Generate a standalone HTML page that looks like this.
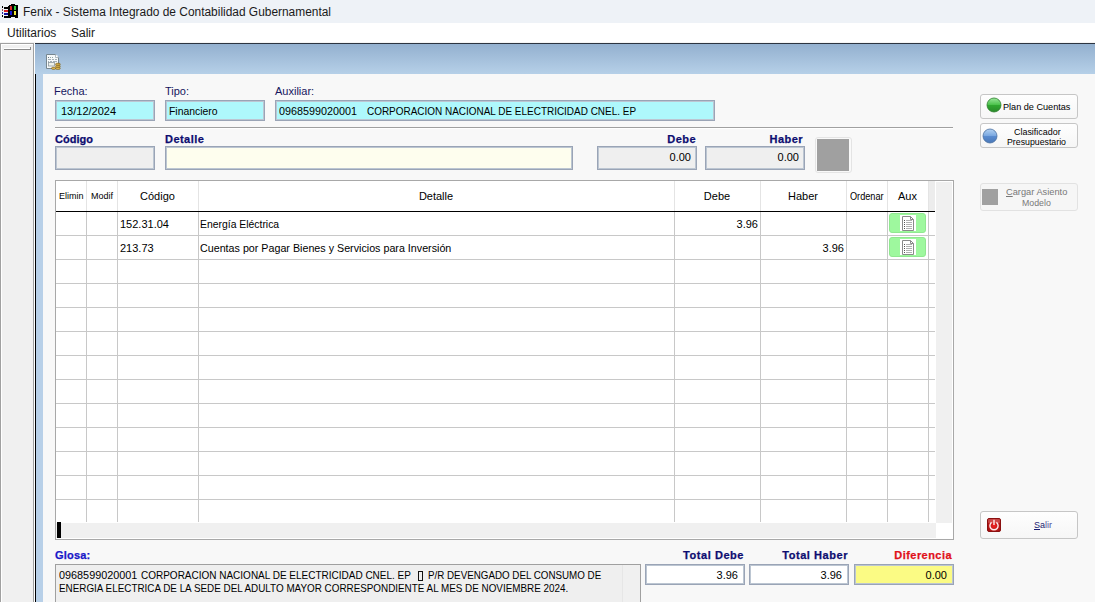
<!DOCTYPE html>
<html><head><meta charset="utf-8">
<style>
*{margin:0;padding:0;box-sizing:border-box}
html,body{width:1095px;height:602px;overflow:hidden;background:#f8f8f8;font-family:"Liberation Sans",sans-serif;font-size:11px;color:#000}
.a{position:absolute}
.t{position:absolute;white-space:pre;line-height:1}
.r{text-align:right}
.c{text-align:center}
.nv{color:#16165e}
.bl{color:#0d0d70;font-weight:bold;letter-spacing:0.45px;-webkit-text-stroke:0.25px #0d0d70}
.box{position:absolute;border:1px solid #9aa4b6;box-shadow:inset 0 0 0 1px #bcc6d2}
.btn{position:absolute;border:1px solid #c6c6c6;border-radius:3px;background:linear-gradient(#fefefe,#f6f6f6)}
.vl{position:absolute;width:1px;background:#c8c8c8}
.hl{position:absolute;height:1px;background:#c8c8c8}
.gb{position:absolute;width:37px;height:20px;background:#9ef89e;border:1px solid #90e890;border-radius:3px}
</style></head><body>
<!-- title bar -->
<div class="a" style="left:0;top:0;width:1095px;height:23px;background:#eef2f7"></div>
<svg class="a" style="left:0;top:0" width="22" height="22" viewBox="0 0 22 22" shape-rendering="crispEdges"><rect x="11" y="4" width="4" height="1" fill="#000"/><rect x="9" y="5" width="9" height="1" fill="#000"/><rect x="8" y="6" width="10" height="11" fill="#000"/><rect x="8" y="17" width="3" height="1" fill="#000"/><rect x="15" y="17" width="3" height="1" fill="#000"/><rect x="11" y="16" width="4" height="1" fill="#000"/><rect x="17" y="17" width="1" height="1" fill="#000"/><rect x="10" y="6" width="2" height="4" fill="#e02828"/><rect x="11" y="6" width="1" height="1" fill="#b02020"/><rect x="14" y="6" width="2" height="4" fill="#30d040"/><rect x="10" y="11" width="2" height="4" fill="#1818d8"/><rect x="14" y="11" width="2" height="4" fill="#f0e838"/><rect x="2" y="6" width="1" height="2" fill="#000"/><rect x="2" y="9" width="1" height="2" fill="#905050"/><rect x="2" y="12" width="1" height="2" fill="#2828a0"/><rect x="2" y="15" width="1" height="2" fill="#000"/><rect x="4" y="7" width="4" height="2" fill="#000"/><rect x="4" y="10" width="4" height="2" fill="#d82020"/><rect x="4" y="13" width="4" height="2" fill="#1010a0"/><rect x="4" y="16" width="4" height="2" fill="#000"/></svg>
<div class="t" style="left:23px;top:6px;font-size:12px;color:#1a1a1a;transform-origin:0 0;transform:scaleX(0.993)">Fenix - Sistema Integrado de Contabilidad Gubernamental</div>
<!-- menu -->
<div class="a" style="left:0;top:23px;width:1095px;height:19px;background:#fff"></div><div class="a" style="left:0;top:42px;width:1095px;height:1px;background:#f4f4f4"></div>
<div class="t" style="left:7px;top:27px;font-size:12px;color:#1a1a1a">Utilitarios</div>
<div class="t" style="left:71px;top:27px;font-size:12px;color:#1a1a1a">Salir</div>
<!-- left panel -->
<div class="a" style="left:0;top:43px;width:35px;height:559px;background:#f0f0f0"></div>
<div class="a" style="left:0;top:43px;width:34px;height:1px;background:#a0a0a0"></div>
<div class="a" style="left:0;top:43px;width:1px;height:559px;background:#a0a0a0"></div>
<div class="a" style="left:1px;top:44px;width:1px;height:558px;background:#fff"></div>
<div class="a" style="left:1px;top:44px;width:32px;height:1px;background:#fff"></div>
<div class="a" style="left:33px;top:43px;width:1px;height:559px;background:#a0a0a0"></div>
<div class="a" style="left:34px;top:43px;width:1px;height:559px;background:#fff"></div>
<div class="a" style="left:4px;top:48px;width:26px;height:1px;background:#fff"></div><div class="a" style="left:4px;top:49px;width:27px;height:1px;background:#8a8a8a"></div><div class="a" style="left:30px;top:47px;width:1px;height:3px;background:#8a8a8a"></div>
<!-- MDI window -->
<div class="a" style="left:35px;top:43px;width:1060px;height:1px;background:#2c3440"></div>
<div class="a" style="left:35px;top:44px;width:1060px;height:30px;background:linear-gradient(#93b0cf,#b6d0e8)"></div>
<div class="a" style="left:35px;top:74px;width:1px;height:528px;background:#000"></div>
<div class="a" style="left:36px;top:74px;width:7px;height:528px;background:#b8d0e8"></div>
<div class="a" style="left:43px;top:74px;width:1052px;height:528px;background:#f8f8f8"></div>
<!-- header icon -->
<svg class="a" style="left:42px;top:50px" width="22" height="22" viewBox="0 0 22 22">
 <path d="M4.5 4.5 H13.5 L16.5 7.5 V18.5 H4.5 Z" fill="#f6f9fa" stroke="#76868f" stroke-width="1"/>
 <path d="M13.5 4.5 V7.5 H16.5" fill="#fff" stroke="#9aa8b0" stroke-width="0.8"/>
 <circle cx="14.8" cy="6.2" r="0.9" fill="#fff"/>
 <rect x="6" y="7" width="1" height="1" fill="#6a7a84"/><rect x="8" y="7" width="1" height="1" fill="#9aa"/><rect x="10" y="7" width="1" height="1" fill="#9aa"/>
 <rect x="6" y="9" width="3" height="1" fill="#a4b0b6"/><rect x="10" y="9" width="2" height="1" fill="#a4b0b6"/><rect x="13" y="9" width="2" height="1" fill="#a4b0b6"/>
 <rect x="6" y="11" width="1" height="1" fill="#a4b0b6"/><rect x="8" y="11" width="2" height="1" fill="#a4b0b6"/><rect x="11" y="11" width="4" height="1" fill="#a4b0b6"/>
 <rect x="6.5" y="12.5" width="6" height="3.5" fill="#eef2ea" stroke="#8e9aa0" stroke-width="0.8"/>
 <g stroke="#7a5a10" stroke-width="0.7">
 <rect x="13.6" y="13.3" width="4.6" height="2" rx="1" fill="#e8c25a"/>
 <rect x="13.6" y="15.3" width="4.6" height="2" rx="1" fill="#e8c25a"/>
 <rect x="13.6" y="17.3" width="4.6" height="2" rx="1" fill="#e8c25a"/>
 <rect x="9.6" y="17.3" width="4" height="2" rx="1" fill="#e8c25a"/>
 </g>
</svg>

<!-- top fields -->
<div class="t nv" style="left:54px;top:86px">Fecha:</div>
<div class="t nv" style="left:165px;top:86px">Tipo:</div>
<div class="t nv" style="left:275px;top:86px">Auxiliar:</div>
<div class="box" style="left:55px;top:100px;width:100px;height:21px;background:#aef8fc"></div>
<div class="box" style="left:165px;top:100px;width:100px;height:21px;background:#aef8fc"></div>
<div class="box" style="left:275px;top:100px;width:440px;height:21px;background:#aef8fc"></div>
<div class="t" style="left:61px;top:106px">13/12/2024</div>
<div class="t" style="left:169px;top:106px;transform-origin:0 0;transform:scaleX(0.947)">Financiero</div>
<div class="t" style="left:279px;top:106px;transform-origin:0 0;transform:scaleX(0.98)">0968599020001</div><div class="t" style="left:366.5px;top:106px;transform-origin:0 0;transform:scaleX(0.905)">CORPORACION NACIONAL DE ELECTRICIDAD CNEL. EP</div>
<div class="a" style="left:55px;top:127px;width:898px;height:1px;background:#a0a0a0"></div>
<div class="a" style="left:55px;top:128px;width:898px;height:1px;background:#fff"></div>

<div class="t bl" style="left:55px;top:134px;letter-spacing:0">Código</div>
<div class="t bl" style="left:165px;top:134px">Detalle</div>
<div class="t bl r" style="left:597px;top:134px;width:99px">Debe</div>
<div class="t bl r" style="left:705px;top:134px;width:98px">Haber</div>
<div class="box" style="left:55px;top:146px;width:100px;height:24px;background:#efefef"></div>
<div class="box" style="left:165px;top:146px;width:408px;height:24px;background:#fefeee"></div>
<div class="box" style="left:597px;top:146px;width:100px;height:24px;background:#efefef"></div>
<div class="box" style="left:705px;top:146px;width:100px;height:24px;background:#efefef"></div>
<div class="t r" style="left:597px;top:152px;width:94px">0.00</div>
<div class="t r" style="left:705px;top:152px;width:94px">0.00</div>
<div class="a" style="left:815px;top:137px;width:37px;height:36px;border:1px solid #e4e4e4;border-radius:3px;background:#f9f9f9"></div>
<div class="a" style="left:817px;top:139px;width:32px;height:32px;background:#a0a0a0"></div>

<!-- right buttons -->
<div class="btn" style="left:980px;top:94px;width:98px;height:25px"></div>
<svg class="a" style="left:986px;top:97px" width="16" height="16" viewBox="0 0 16 16"><defs><linearGradient id="gg" x1="0" y1="0" x2="0" y2="1"><stop offset="0" stop-color="#9be89b"/><stop offset="0.48" stop-color="#4cc24c"/><stop offset="0.52" stop-color="#2fa82f"/><stop offset="1" stop-color="#2a8a2a"/></linearGradient></defs><circle cx="8" cy="8" r="7" fill="url(#gg)" stroke="#2d7d2d" stroke-width="0.8"/></svg>
<div class="t" style="left:1002.7px;top:102px;font-size:9.5px;transform-origin:0 0;transform:scaleX(0.96)">Plan de Cuentas</div>
<div class="btn" style="left:980px;top:123px;width:98px;height:25px"></div>
<svg class="a" style="left:982px;top:128px" width="16" height="16" viewBox="0 0 16 16"><defs><linearGradient id="bg" x1="0" y1="0" x2="0" y2="1"><stop offset="0" stop-color="#b4d2f2"/><stop offset="0.48" stop-color="#7aa8e0"/><stop offset="0.52" stop-color="#5a8cd0"/><stop offset="1" stop-color="#4a78b8"/></linearGradient></defs><circle cx="8" cy="8" r="7" fill="url(#bg)" stroke="#4a70a0" stroke-width="0.8"/></svg>
<div class="t" style="left:1014px;top:127px;font-size:9.5px;transform-origin:0 0;transform:scaleX(0.94)">Clasificador</div>
<div class="t" style="left:1007.3px;top:137px;font-size:9.5px;transform-origin:0 0;transform:scaleX(0.923)">Presupuestario</div>
<div class="btn" style="left:980px;top:183px;width:98px;height:28px;border-color:#e2e2e2;background:#f6f6f6"></div>
<div class="a" style="left:982px;top:189px;width:16px;height:16px;background:#a0a0a0"></div>
<div class="t" style="left:1005.8px;top:187px;font-size:9.5px;color:#787878;transform-origin:0 0;transform:scaleX(0.975)"><u>C</u>argar Asiento</div>
<div class="t" style="left:1022.2px;top:198px;font-size:9.5px;color:#787878;transform-origin:0 0;transform:scaleX(0.923)">Modelo</div>
<div class="btn" style="left:980px;top:511px;width:98px;height:28px"></div>
<svg class="a" style="left:987px;top:518px" width="14" height="14" viewBox="0 0 14 14"><defs><radialGradient id="rg" cx="0.5" cy="0.55" r="0.6"><stop offset="0" stop-color="#f02020"/><stop offset="0.6" stop-color="#c01818"/><stop offset="1" stop-color="#9a1010"/></radialGradient></defs>
 <rect x="0.5" y="0.5" width="13" height="13" rx="1.5" fill="url(#rg)" stroke="#8a1010" stroke-width="1"/>
 <rect x="1" y="1" width="12" height="4" rx="1" fill="#f08080" opacity="0.45"/>
 <path d="M4.6 4.4 A4.1 4.1 0 1 0 9.4 4.4" fill="none" stroke="#fbeaea" stroke-width="1.4"/>
 <rect x="6.3" y="1.8" width="1.4" height="5.2" fill="#fbeaea"/>
</svg>
<div class="t" style="left:1034.4px;top:520px;font-size:9.5px;color:#1a1a70;transform-origin:0 0;transform:scaleX(0.947)"><u>S</u>a<span style="color:#50509a">lir</span></div>

<!-- grid -->
<div class="a" style="left:55px;top:180px;width:899px;height:360px;border:1px solid #a8a8a8;background:#fff"></div>
<div class="a" style="left:928px;top:181px;width:7px;height:30px;background:#ececec"></div>
<div class="a" style="left:936px;top:182px;width:16px;height:341px;background:#f0f0f0"></div>
<div class="a" style="left:56px;top:523px;width:880px;height:15px;background:#f0f0f0"></div>
<div class="a" style="left:57px;top:522px;width:4px;height:16px;background:#000"></div>
<div class="a" style="left:86px;top:181px;width:1px;height:30px;background:#e4e4e4"></div>
<div class="vl" style="left:86px;top:212px;height:310px"></div>
<div class="a" style="left:117px;top:181px;width:1px;height:30px;background:#e4e4e4"></div>
<div class="vl" style="left:117px;top:212px;height:310px"></div>
<div class="a" style="left:198px;top:181px;width:1px;height:30px;background:#e4e4e4"></div>
<div class="vl" style="left:198px;top:212px;height:310px"></div>
<div class="a" style="left:674px;top:181px;width:1px;height:30px;background:#e4e4e4"></div>
<div class="vl" style="left:674px;top:212px;height:310px"></div>
<div class="a" style="left:760px;top:181px;width:1px;height:30px;background:#e4e4e4"></div>
<div class="vl" style="left:760px;top:212px;height:310px"></div>
<div class="a" style="left:846px;top:181px;width:1px;height:30px;background:#e4e4e4"></div>
<div class="vl" style="left:846px;top:212px;height:310px"></div>
<div class="a" style="left:887px;top:181px;width:1px;height:30px;background:#e4e4e4"></div>
<div class="vl" style="left:887px;top:212px;height:310px"></div>
<div class="a" style="left:928px;top:181px;width:1px;height:30px;background:#e4e4e4"></div>
<div class="vl" style="left:928px;top:212px;height:310px"></div>
<div class="a" style="left:56px;top:211px;width:879px;height:1px;background:#000"></div>
<div class="hl" style="left:56px;top:235px;width:879px"></div>
<div class="hl" style="left:56px;top:259px;width:879px"></div>
<div class="hl" style="left:56px;top:283px;width:879px"></div>
<div class="hl" style="left:56px;top:307px;width:879px"></div>
<div class="hl" style="left:56px;top:331px;width:879px"></div>
<div class="hl" style="left:56px;top:355px;width:879px"></div>
<div class="hl" style="left:56px;top:379px;width:879px"></div>
<div class="hl" style="left:56px;top:403px;width:879px"></div>
<div class="hl" style="left:56px;top:427px;width:879px"></div>
<div class="hl" style="left:56px;top:451px;width:879px"></div>
<div class="hl" style="left:56px;top:475px;width:879px"></div>
<div class="hl" style="left:56px;top:499px;width:879px"></div>
<div class="gb" style="left:889px;top:213px"></div>
<svg class="a" style="left:900px;top:215px" width="16" height="17" viewBox="0 0 16 17"><rect x="0" y="0" width="16" height="16" fill="#fff"/><path d="M2.5 1.5H10.5L13.5 4.5V15.5H2.5Z" fill="#fff" stroke="#8a8a8a"/><path d="M10.5 1.5V4.5H13.5" fill="none" stroke="#8a8a8a"/><rect x="4" y="5" width="1" height="1" fill="#555"/><rect x="6" y="5" width="6" height="1" fill="#b0b0b0"/><rect x="4" y="7" width="1" height="1" fill="#555"/><rect x="6" y="7" width="6" height="1" fill="#b0b0b0"/><rect x="4" y="9" width="1" height="1" fill="#555"/><rect x="6" y="9" width="6" height="1" fill="#b0b0b0"/><rect x="4" y="11" width="1" height="1" fill="#555"/><rect x="6" y="11" width="6" height="1" fill="#b0b0b0"/><rect x="4" y="13" width="1" height="1" fill="#555"/><rect x="6" y="13" width="6" height="1" fill="#b0b0b0"/></svg>
<div class="gb" style="left:889px;top:237px"></div>
<svg class="a" style="left:900px;top:239px" width="16" height="17" viewBox="0 0 16 17"><rect x="0" y="0" width="16" height="16" fill="#fff"/><path d="M2.5 1.5H10.5L13.5 4.5V15.5H2.5Z" fill="#fff" stroke="#8a8a8a"/><path d="M10.5 1.5V4.5H13.5" fill="none" stroke="#8a8a8a"/><rect x="4" y="5" width="1" height="1" fill="#555"/><rect x="6" y="5" width="6" height="1" fill="#b0b0b0"/><rect x="4" y="7" width="1" height="1" fill="#555"/><rect x="6" y="7" width="6" height="1" fill="#b0b0b0"/><rect x="4" y="9" width="1" height="1" fill="#555"/><rect x="6" y="9" width="6" height="1" fill="#b0b0b0"/><rect x="4" y="11" width="1" height="1" fill="#555"/><rect x="6" y="11" width="6" height="1" fill="#b0b0b0"/><rect x="4" y="13" width="1" height="1" fill="#555"/><rect x="6" y="13" width="6" height="1" fill="#b0b0b0"/></svg>
<div class="t" style="left:59px;top:192px;font-size:9px">Elimin</div>
<div class="t" style="left:91px;top:192px;font-size:9px">Modif</div>
<div class="t c" style="left:117px;top:191px;width:81px">Código</div>
<div class="t c" style="left:198px;top:191px;width:476px">Detalle</div>
<div class="t c" style="left:674px;top:191px;width:86px">Debe</div>
<div class="t c" style="left:760px;top:191px;width:86px">Haber</div>
<div class="t" style="left:849.5px;top:191.5px;font-size:10px;transform-origin:0 0;transform:scaleX(0.915)">Ordenar</div>
<div class="t c" style="left:887px;top:191px;width:41px">Aux</div>
<div class="t" style="left:120px;top:219px">152.31.04</div>
<div class="t" style="left:200px;top:219px;transform-origin:0 0;transform:scaleX(0.945)">Energía Eléctrica</div>
<div class="t r" style="left:674px;top:219px;width:84px">3.96</div>
<div class="t" style="left:120px;top:243px">213.73</div>
<div class="t" style="left:200px;top:243px;transform-origin:0 0;transform:scaleX(0.974)">Cuentas por Pagar Bienes y Servicios para Inversión</div>
<div class="t r" style="left:760px;top:243px;width:84px">3.96</div>
<!-- glosa -->
<div class="t" style="left:55px;top:550px;font-weight:bold;color:#1818c8;letter-spacing:0.2px;-webkit-text-stroke:0.25px #1818c8">Glosa:</div>
<div class="a" style="left:55px;top:564px;width:586px;height:40px;border:1px solid #a0a0a0;border-bottom:none;background:#efefef"></div>
<div class="a" style="left:622px;top:565px;width:18px;height:40px;background:#f0f0f0;border-left:1px solid #e6e6e6"></div>
<div class="t" style="left:59px;top:570px;transform-origin:0 0;transform:scaleX(0.985)">0968599020001</div><div class="t" style="left:140.5px;top:570px;transform-origin:0 0;transform:scaleX(0.908)">CORPORACION NACIONAL DE ELECTRICIDAD CNEL. EP</div><div class="a" style="left:418px;top:571px;width:5px;height:10px;border:1px solid #111"></div><div class="t" style="left:427.5px;top:570px;transform-origin:0 0;transform:scaleX(0.89)">P/R DEVENGADO DEL CONSUMO DE</div>
<div class="t" style="left:59px;top:583px;transform-origin:0 0;transform:scaleX(0.897)">ENERGIA ELECTRICA DE LA SEDE DEL ADULTO MAYOR CORRESPONDIENTE AL MES DE NOVIEMBRE 2024.</div>

<div class="t bl r" style="left:641px;top:550px;width:103px;letter-spacing:0.55px">Total Debe</div>
<div class="t bl r" style="left:745px;top:550px;width:103px;letter-spacing:0.55px">Total Haber</div>
<div class="t r" style="left:850px;top:550px;width:102px;font-weight:bold;color:#e0101a;letter-spacing:0.45px;-webkit-text-stroke:0.25px #e0101a">Diferencia</div>
<div class="box" style="left:645px;top:564px;width:100px;height:21px;background:#fff"></div>
<div class="box" style="left:749px;top:564px;width:100px;height:21px;background:#fff"></div>
<div class="box" style="left:854px;top:564px;width:100px;height:21px;background:#fbfb84"></div>
<div class="t r" style="left:645px;top:570px;width:93px">3.96</div>
<div class="t r" style="left:749px;top:570px;width:93px">3.96</div>
<div class="t r" style="left:854px;top:570px;width:93px">0.00</div>
</body></html>
